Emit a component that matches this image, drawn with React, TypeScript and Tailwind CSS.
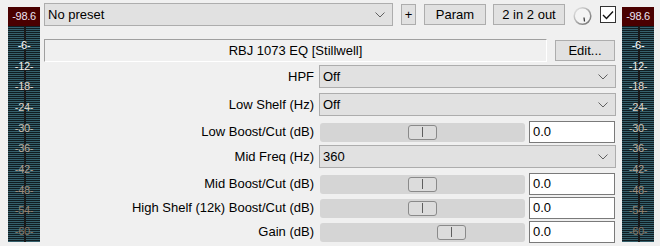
import React from "react";

// meter scale labels, top to bottom
const scale = [
  { t: "-6-", c: "text-[#ffffff]" },
  { t: "-12-", c: "text-[#f4eee8]" },
  { t: "-18-", c: "text-[#e8dccf]" },
  { t: "-24-", c: "text-[#dcd0c4]" },
  { t: "-30-", c: "text-[#ccc0b2]" },
  { t: "-36-", c: "text-[#bcae9e]" },
  { t: "-42-", c: "text-[#ad9e8e]" },
  { t: "-48-", c: "text-[#a08f7e]" },
  { t: "-54-", c: "text-[#93826f]" },
  { t: "-60-", c: "text-[#877562]" },
];

type Row =
  | { label: string; kind: "select"; value: string; mt: string }
  | { label: string; kind: "slider"; value: string; mt: string; thumb: string };

const rows: Row[] = [
  { label: "HPF", kind: "select", value: "Off", mt: "mt-[3px]" },
  { label: "Low Shelf (Hz)", kind: "select", value: "Off", mt: "mt-[5px]" },
  { label: "Low Boost/Cut (dB)", kind: "slider", value: "0.0", mt: "mt-[5px]", thumb: "ml-[88px]" },
  { label: "Mid Freq (Hz)", kind: "select", value: "360", mt: "mt-[2px]" },
  { label: "Mid Boost/Cut (dB)", kind: "slider", value: "0.0", mt: "mt-[5px]", thumb: "ml-[88px]" },
  { label: "High Shelf (12k) Boost/Cut (dB)", kind: "slider", value: "0.0", mt: "mt-[2px]", thumb: "ml-[88px]" },
  { label: "Gain (dB)", kind: "slider", value: "0.0", mt: "mt-[2px]", thumb: "ml-[117px]" },
];

function Meter() {
  return (
    <div className="relative mt-[7px] flex h-[235px] w-[32px] shrink-0 flex-col bg-[repeating-linear-gradient(to_bottom,#35606c_0px,#35606c_1px,#101d22_1px,#101d22_2px)]">
      <div className="absolute left-[16px] top-0 h-full w-[2px] bg-[#1a1a1a]" />
      <div className="relative flex h-[22px] items-center justify-center bg-[#4a0000] text-[11px] tracking-[-0.3px] text-[#ece4f4]">
        -98.6
      </div>
      <div className="relative flex flex-col pt-[9px]">
        {scale.map((s) => (
          <div key={s.t} className={`flex h-[20.7px] items-center justify-center text-[11px] leading-none tracking-[-0.3px] ${s.c}`}>
            {s.t}
          </div>
        ))}
      </div>
    </div>
  );
}

function Chevron() {
  return (
    <svg width="10" height="6" viewBox="0 0 10 6" className="shrink-0">
      <polyline points="0.5,0.5 5,5 9.5,0.5" fill="none" stroke="#606060" strokeWidth="1" />
    </svg>
  );
}

function Select({ value, className }: { value: string; className: string }) {
  return (
    <div className={`flex h-[23px] items-center justify-between border border-[#adadad] bg-[#e1e1e1] pl-[3px] pr-[7px] text-[13px] ${className}`}>
      <span>{value}</span>
      <Chevron />
    </div>
  );
}

function Knob() {
  return (
    <svg width="19" height="20" viewBox="0 0 19 20" className="shrink-0">
      <defs>
        <linearGradient id="kr" x1="0" y1="0" x2="1" y2="1">
          <stop offset="0" stopColor="#ececec" />
          <stop offset="1" stopColor="#6a6a6a" />
        </linearGradient>
      </defs>
      <circle cx="9.5" cy="10" r="8.3" fill="#f4f4f4" stroke="url(#kr)" strokeWidth="1.5" />
      <line x1="11" y1="11.5" x2="11.5" y2="15.5" stroke="#333" strokeWidth="1.2" />
    </svg>
  );
}

export default function App() {
  return (
    <div className="flex h-[246px] w-[660px] bg-[#f0f0f0] font-['Liberation_Sans',Arial,sans-serif] text-black">
      <div className="ml-[8px]">
        <Meter />
      </div>

      <div className="ml-[4px] flex w-[572px] flex-col pt-[3px]">
        {/* preset row */}
        <div className="flex h-[23px] items-center">
          <Select value="No preset" className="w-[349px]" />
          <button className="ml-[8px] flex h-[21px] w-[15px] items-center justify-center border border-[#adadad] bg-[#e1e1e1] text-[13px]">
            +
          </button>
          <button className="ml-[8px] flex h-[21px] w-[62px] items-center justify-center border border-[#adadad] bg-[#e1e1e1] text-[13px]">
            Param
          </button>
          <button className="ml-[7px] flex h-[21px] w-[72px] items-center justify-center border border-[#adadad] bg-[#e1e1e1] text-[13px]">
            2 in 2 out
          </button>
          <div className="ml-[8px] mt-[2px] flex items-center">
            <Knob />
          </div>
          <div className="ml-[8px] flex h-[17px] w-[16px] items-center justify-center border border-[#333] bg-white">
            <svg width="12" height="10" viewBox="0 0 12 10">
              <polyline points="1,5 4.5,8.5 11,1.5" fill="none" stroke="#111" strokeWidth="1.4" />
            </svg>
          </div>
        </div>

        {/* effect name row */}
        <div className="mt-[13px] flex h-[23px] items-center">
          <div className="flex h-[23px] w-[503px] items-center justify-center border-b border-l border-r border-t border-b-white border-l-[#a0a0a0] border-r-white border-t-[#a0a0a0] text-[13px]">
            RBJ 1073 EQ [Stillwell]
          </div>
          <button className="ml-[8px] flex h-[21px] w-[60px] items-center justify-center border border-[#adadad] bg-[#e1e1e1] text-[13px]">
            Edit...
          </button>
        </div>

        {/* parameter rows */}
        {rows.map((r) => (
          <div key={r.label} className={`flex items-center ${r.mt} ${r.kind === "select" ? "h-[23px]" : "h-[22px]"}`}>
            <div className="w-[270px] shrink-0 text-right text-[13px]">{r.label}</div>
            {r.kind === "select" ? (
              <Select value={r.value} className="ml-[5px] flex-1" />
            ) : (
              <>
                <div className="ml-[6px] flex h-[19px] w-[205px] items-center rounded-[3px] bg-[#d5d5d5]">
                  <div className={`flex h-[15px] w-[29px] items-center justify-center rounded-[3px] border border-[#8a8a8a] bg-[#dcdcdc] ${r.thumb}`}>
                    <div className="h-[10px] w-px bg-[#5e5e5e]" />
                  </div>
                </div>
                <div className="ml-[4px] flex h-[22px] w-[86px] items-center border border-[#7a7a7a] bg-white pl-[3px] text-[13px]">
                  {r.value}
                </div>
              </>
            )}
          </div>
        ))}
      </div>

      <div className="ml-[6px]">
        <Meter />
      </div>
    </div>
  );
}
